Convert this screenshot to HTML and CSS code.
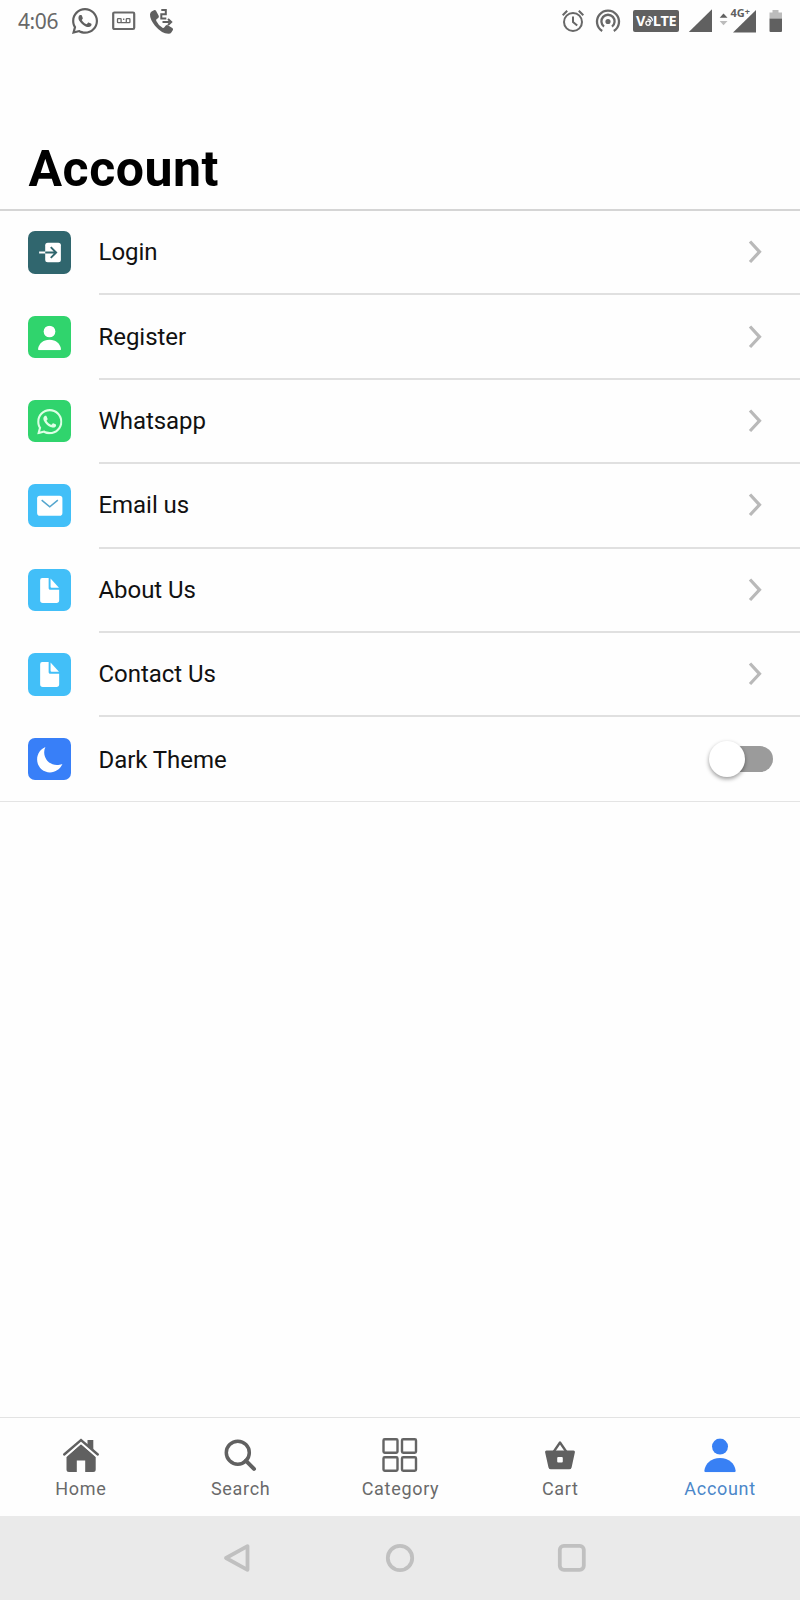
FILE: index.html
```html
<!DOCTYPE html>
<html lang="en">
<head>
<meta charset="utf-8">
<title>Account</title>
<link rel="stylesheet" href="styles.css">
</head>
<body>
<svg class="defs" width="0" height="0" aria-hidden="true">
  <symbol id="whatsapp" viewBox="0 32 448 448"><path d="M380.9 97.1C339 55.1 283.2 32 223.9 32c-122.4 0-222 99.6-222 222 0 39.1 10.2 77.3 29.6 111L0 480l117.7-30.9c32.4 17.7 68.9 27 106.1 27h.1c122.3 0 224.1-99.6 224.1-222 0-59.3-25.2-115-67.1-157zm-157 341.6c-33.2 0-65.7-8.9-94-25.7l-6.7-4-69.8 18.3L72 359.2l-4.4-7c-18.5-29.4-28.2-63.3-28.2-98.2 0-101.7 82.8-184.5 184.6-184.5 49.3 0 95.6 19.2 130.4 54.1 34.8 34.9 56.2 81.2 56.1 130.5 0 101.8-84.9 184.6-186.6 184.6zm101.2-138.2c-5.5-2.8-32.8-16.2-37.9-18-5.1-1.9-8.8-2.8-12.5 2.8-3.7 5.6-14.3 18-17.6 21.8-3.2 3.7-6.5 4.2-12 1.4-32.6-16.3-54-29.1-75.5-66-5.7-9.8 5.7-9.1 16.3-30.3 1.8-3.7.9-6.9-.5-9.7-1.4-2.8-12.5-30.1-17.1-41.2-4.5-10.8-9.1-9.3-12.5-9.5-3.2-.2-6.9-.2-10.6-.2-3.7 0-9.7 1.4-14.8 6.9-5.1 5.6-19.4 19-19.4 46.3 0 27.3 19.9 53.7 22.6 57.4 2.8 3.7 39.1 59.7 94.8 83.8 35.2 15.2 49 16.5 66.6 13.9 10.7-1.6 32.8-13.4 37.4-26.4 4.6-13 4.6-24.1 3.2-26.4-1.3-2.5-5-3.9-10.5-6.6z"/></symbol>
  <symbol id="chevron" viewBox="0 0 16 26"><path d="M3 2.500l9.500 10.300L3 23" fill="none" stroke="#b9b9b9" stroke-width="3.200"/></symbol>
  <symbol id="document" viewBox="0 0 42 42"><path d="M14 9h6.400v10q0 1.600 1.600 1.600h8.800V31q0 2.700-2.700 2.700H14.600Q12 33.700 12 31V11q0-2 2-2z"/><path d="M22.300 9.300v8.200q0 1 1 1h7.300z"/></symbol>
  <symbol id="person" viewBox="0 0 32 34"><circle cx="16" cy="8.300" r="8"/><path d="M2 34q-1.800 0-1.600-1.900C1.200 25.600 7 19.700 16 19.700s14.800 5.900 15.600 12.400q.2 1.900-1.600 1.900z"/></symbol>
</svg>
<div class="screen">
  <header class="status">
    <div class="status-left">
      <span class="clock">4:06</span>
      <svg class="wa" width="26" height="26"><use href="#whatsapp"/></svg>
      <svg class="tape" width="24" height="20" viewBox="0 0 24 20" fill="none" stroke="#686868"><rect x="1.200" y="1.500" width="21" height="16.500" rx="1.200" stroke-width="2.200"/><g stroke-width="1.300"><rect x="5.500" y="7.700" width="3.600" height="3.900" rx=".6"/><rect x="14.300" y="7.700" width="3.600" height="3.900" rx=".6"/><path d="M9 11.700h5.500M11.700 7.500v1.500"/></g></svg>
      <svg class="call" width="26" height="27" viewBox="0 0 26 27"><path d="M2.600 3.600L5 2.200q1.300-.6 2 .6l2.700 5q.6 1.300-.5 2.100l-1.700 1.300q-.7.700-.2 1.700 2 4.200 6.200 6.900 1 .5 1.700-.3l1.600-1.900q.8-.9 2-.3l4.500 2.700q1.200.8.600 2l-1.400 2.300q-1 1.500-3 1.500Q12.500 25.500 6 17.700.8 11.300 1 6.600q.1-2 1.600-3z"/><path d="M12.300 2h4.500v4.200h-4.500v4.300h5M13.500 14h7M19 11l3.200 3-3.200 3" fill="none" stroke="#606060" stroke-width="2"/></svg>
    </div>
    <div class="status-right">
      <svg width="24" height="24" viewBox="0 0 24 24" fill="none" stroke="#686868" stroke-width="2"><circle cx="12" cy="13" r="9"/><path d="M12 7.500V13l4.200 3.500M1.700 6.200l4.500-4.500M22.300 6.200l-4.500-4.500"/></svg>
      <svg class="hotspot" width="26" height="24" viewBox="0 0 26 24" fill="none" stroke="#686868" stroke-width="2.300"><path d="M7.200 22A11 11 0 1 1 18.800 22"/><path d="M9 17.600A6.600 6.600 0 1 1 17 17.600"/><circle cx="13" cy="12.500" r="2.600" fill="#686868" stroke="none"/></svg>
      <span class="volte">V<svg width="8" height="12" viewBox="0 0 8 12" fill="none" stroke="#fff" stroke-width="1.300"><circle cx="3" cy="8.300" r="2.100"/><path d="M2.500 4.200q3 0 3.700 3M3.500 1.700q3.500.2 4 4"/></svg>LTE</span>
      <svg class="signal" width="24" height="24"><path d="M24 .3V23H.8z"/></svg>
      <svg class="mobile" width="38" height="26" viewBox="0 0 38 26"><path d="M4.500 6.500l4 4.300H.7z"/><path d="M.7 14h7.800l-4 4.200z" fill="#bcbcbc"/><path d="M37 3v22.500H14z"/><path d="M11 0h20.500L24 10H11z" fill="#fff"/><text x="11.500" y="9.500">4G<tspan dy="-2" font-size="9">+</tspan></text></svg>
      <svg class="battery" width="14" height="24" viewBox="0 0 14 24"><path fill="#bcbcbc" d="M3.500 1h6v2.500H13v6H.5v-6h3z"/><path d="M.5 9.500H13V22q0 1-1 1H1.500q-1 0-1-1z"/></svg>
    </div>
  </header>
  <h1 class="title">Account</h1>
  <main class="list">
    <div class="row"><svg class="tile login" viewBox="0 0 42 42"><path fill="#fff" d="M19.500 11.500H30q2.500 0 2.500 2.500v14.500q0 2.500-2.500 2.500H19.500q-2.500 0-2.500-2.500V14q0-2.500 2.500-2.500z"/><path d="M11 21.300h7" stroke="#fff" stroke-width="2"/><path d="M17 21.300h10.500M22.500 16l5.300 5.300-5.300 5.300" fill="none" stroke="#30666e" stroke-width="1.900"/></svg><div class="line"><span>Login</span><svg class="chev"><use href="#chevron"/></svg></div></div>
    <div class="row"><svg class="tile green" viewBox="0 0 42 42"><use href="#person" x="9.500" y="9.300" width="23.500" height="24.600"/></svg><div class="line"><span>Register</span><svg class="chev"><use href="#chevron"/></svg></div></div>
    <div class="row"><svg class="tile green" viewBox="0 0 42 42"><use href="#whatsapp" x="9" y="9" width="25" height="25" fill="#ddffe5"/></svg><div class="line"><span>Whatsapp</span><svg class="chev"><use href="#chevron"/></svg></div></div>
    <div class="row"><svg class="tile sky" viewBox="0 0 42 42"><rect x="9" y="11.500" width="25" height="20" rx="2.800"/><path d="M13.500 16l8 6.500 8-6.500" fill="none" stroke="#55a6ce" stroke-width="1.500"/></svg><div class="line"><span>Email us</span><svg class="chev"><use href="#chevron"/></svg></div></div>
    <div class="row"><svg class="tile sky" viewBox="0 0 42 42"><use href="#document"/></svg><div class="line"><span>About Us</span><svg class="chev"><use href="#chevron"/></svg></div></div>
    <div class="row"><svg class="tile sky" viewBox="0 0 42 42"><use href="#document"/></svg><div class="line"><span>Contact Us</span><svg class="chev"><use href="#chevron"/></svg></div></div>
    <div class="row"><svg class="tile blue" viewBox="0 0 42 42"><path d="M17.200 9C12.500 11 9 15.700 9 21.300 9 28.300 14.700 34 21.700 34c5.300 0 10.200-3.300 12.300-8.300-2 .8-3.800 1-5.400 1C21.800 26.700 16 21 16 14c0-1.600.4-3.400 1.200-5z"/></svg><div class="line last"><span>Dark Theme</span><div class="switch"><i class="thumb"></i></div></div></div>
  </main>
  <nav class="tabs">
    <a class="tab"><svg width="38" height="36" viewBox="0 0 38 36"><path d="M19 7L33.700 20v12.500q0 2.500-2.500 2.500h-8V23.500h-8.400V35H7q-2.500 0-2.500-2.500V20z"/><path d="M2.500 19.500L19 5.500l16.500 14" fill="none" stroke="#fefefe" stroke-width="2.400"/><path d="M25.500 3h5.800v11l-5.800-5z"/><path d="M2.200 17.500L19 3l16.800 14.500" fill="none" stroke="#606060" stroke-width="2.400" stroke-linecap="round"/></svg><span>Home</span></a>
    <a class="tab"><svg width="34" height="36" viewBox="0 0 34 36" fill="none" stroke="#606060"><circle cx="13.800" cy="15.700" r="11.500" stroke-width="3.500"/><path d="M21.800 23.700l8.200 8.200" stroke-width="4" stroke-linecap="round"/></svg><span>Search</span></a>
    <a class="tab"><svg width="36" height="36" viewBox="0 0 36 36" fill="none" stroke="#646464" stroke-width="2.400"><rect x="1.500" y="2.300" width="14" height="13.500" rx="1.200"/><rect x="20" y="2.300" width="14" height="13.500" rx="1.200"/><rect x="1.500" y="20.300" width="14" height="13.500" rx="1.200"/><rect x="20" y="20.300" width="14" height="13.500" rx="1.200"/></svg><span>Category</span></a>
    <a class="tab"><svg width="32" height="36" viewBox="0 0 32 36"><path d="M9.500 15L16 5.500 22.500 15" fill="none" stroke="#606060" stroke-width="2.300" stroke-linejoin="round"/><path fill-rule="evenodd" d="M2.500 13.500h27q1.700 0 1.400 1.700l-3.300 15.200q-.5 1.900-2.500 1.900H7q-2 0-2.500-1.900L1.100 15.200q-.3-1.700 1.400-1.700zM14.200 20q-1 0-1 1v3.500q0 1 1 1h3.600q1 0 1-1V21q0-1-1-1z"/></svg><span>Cart</span></a>
    <a class="tab active"><svg width="32" height="36"><use href="#person" x="0" y="1.300" width="32" height="34"/></svg><span>Account</span></a>
  </nav>
  <footer class="system">
    <svg width="30" height="30" viewBox="0 0 30 30"><path d="M4 15L25.500 3.200v23.600z" stroke-linejoin="round"/></svg>
    <svg class="home-btn" width="30" height="30" viewBox="0 0 30 30"><circle cx="15" cy="15" r="12.200"/></svg>
    <svg class="recent-btn" width="30" height="30" viewBox="0 0 30 30"><rect x="2.800" y="2.800" width="24" height="24" rx="4"/></svg>
  </footer>
</div>
</body>
</html>
```

FILE: styles.css
```css
* { box-sizing: border-box; }
body { margin: 0; background: #fefefe; font-family: Roboto, "Liberation Sans", sans-serif; }
svg { display: block; flex: none; }
.defs { position: absolute; }
.screen { width: 800px; height: 1600px; display: flex; flex-direction: column; }
.status { height: 42px; padding: 0 18px; display: flex; justify-content: space-between; fill: #606060; color: #686868; }
.status-left, .status-right { display: flex; align-items: center; }
.status-right { margin-right: -1px; }
.clock { width: 54px; font: 21px/42px "Noto Sans", sans-serif; letter-spacing: -.4px; }
.tape { margin-left: 14px; }
.call { margin-left: 13px; }
.hotspot { margin-left: 10px; }
.volte { width: 46px; height: 22px; margin-left: 12px; background: #606060; border-radius: 2px; color: #fff; font: bold 14.500px/22px "Open Sans", sans-serif; letter-spacing: -.5px; display: flex; align-items: center; justify-content: center; }
.signal { margin-left: 9px; }
.mobile { margin: -2px 0 0 7px; overflow: visible; }
.mobile text { font: bold 11px/1 "Open Sans", sans-serif; fill: #606060; }
.battery { margin-left: 12px; }
.title { margin: 0; height: 169px; padding: 97px 28.500px 0; border-bottom: 2px solid #d5d5d5; font-size: 50px; line-height: 60px; font-weight: 700; letter-spacing: .5px; color: #000; }
.list { height: 591px; border-bottom: 1px solid #e4e4e4; display: grid; grid-template-rows: repeat(7, 84.400px); }
.row { display: flex; align-items: center; padding-left: 28px; }
.tile { width: 42.500px; height: 42.500px; border-radius: 7px; fill: #fff; margin: -1.500px 28px 0 0; }
.login { background: #30666e; }
.green { background: #30d46d; }
.sky { background: #42bff8; }
.blue { background: #387ff8; }
.line { flex: 1; height: 100%; display: flex; align-items: center; justify-content: space-between; border-bottom: 2px solid #e0e0e0; font-size: 24px; letter-spacing: -.05px; color: #111; }
.line.last { border: 0; padding-right: 27px; }
.chev { width: 16px; height: 26px; margin-right: 37px; }
.switch { width: 64px; height: 38px; margin-top: -1px; display: flex; align-items: center; }
.switch::after { content: ""; width: 46px; height: 26px; margin-left: -18px; border-radius: 0 13px 13px 0; background: #9b9b9b; }
.thumb { flex: none; position: relative; width: 36px; height: 36px; border-radius: 50%; background: #fff; box-shadow: 0 2px 4px rgba(0, 0, 0, .4); z-index: 1; }
.tabs { margin-top: auto; height: 99px; border-top: 1px solid #e3e3e3; padding: 19px 0 0 1px; display: grid; grid-template-columns: repeat(5, 1fr); fill: #606060; color: #6a6a6a; }
.tab { display: flex; flex-direction: column; align-items: center; font-size: 18px; line-height: 24px; letter-spacing: .7px; }
.tab span { margin-top: 4px; }
.tab.active { color: #4b87c9; fill: #3880f4; }
.system { height: 84px; padding-top: 27px; background: #eaeaea; display: flex; align-items: flex-start; padding-left: 222px; fill: none; stroke: #c0c0c0; stroke-width: 3.800; }
.home-btn { margin-left: 133px; }
.recent-btn { margin-left: 142px; }
```
